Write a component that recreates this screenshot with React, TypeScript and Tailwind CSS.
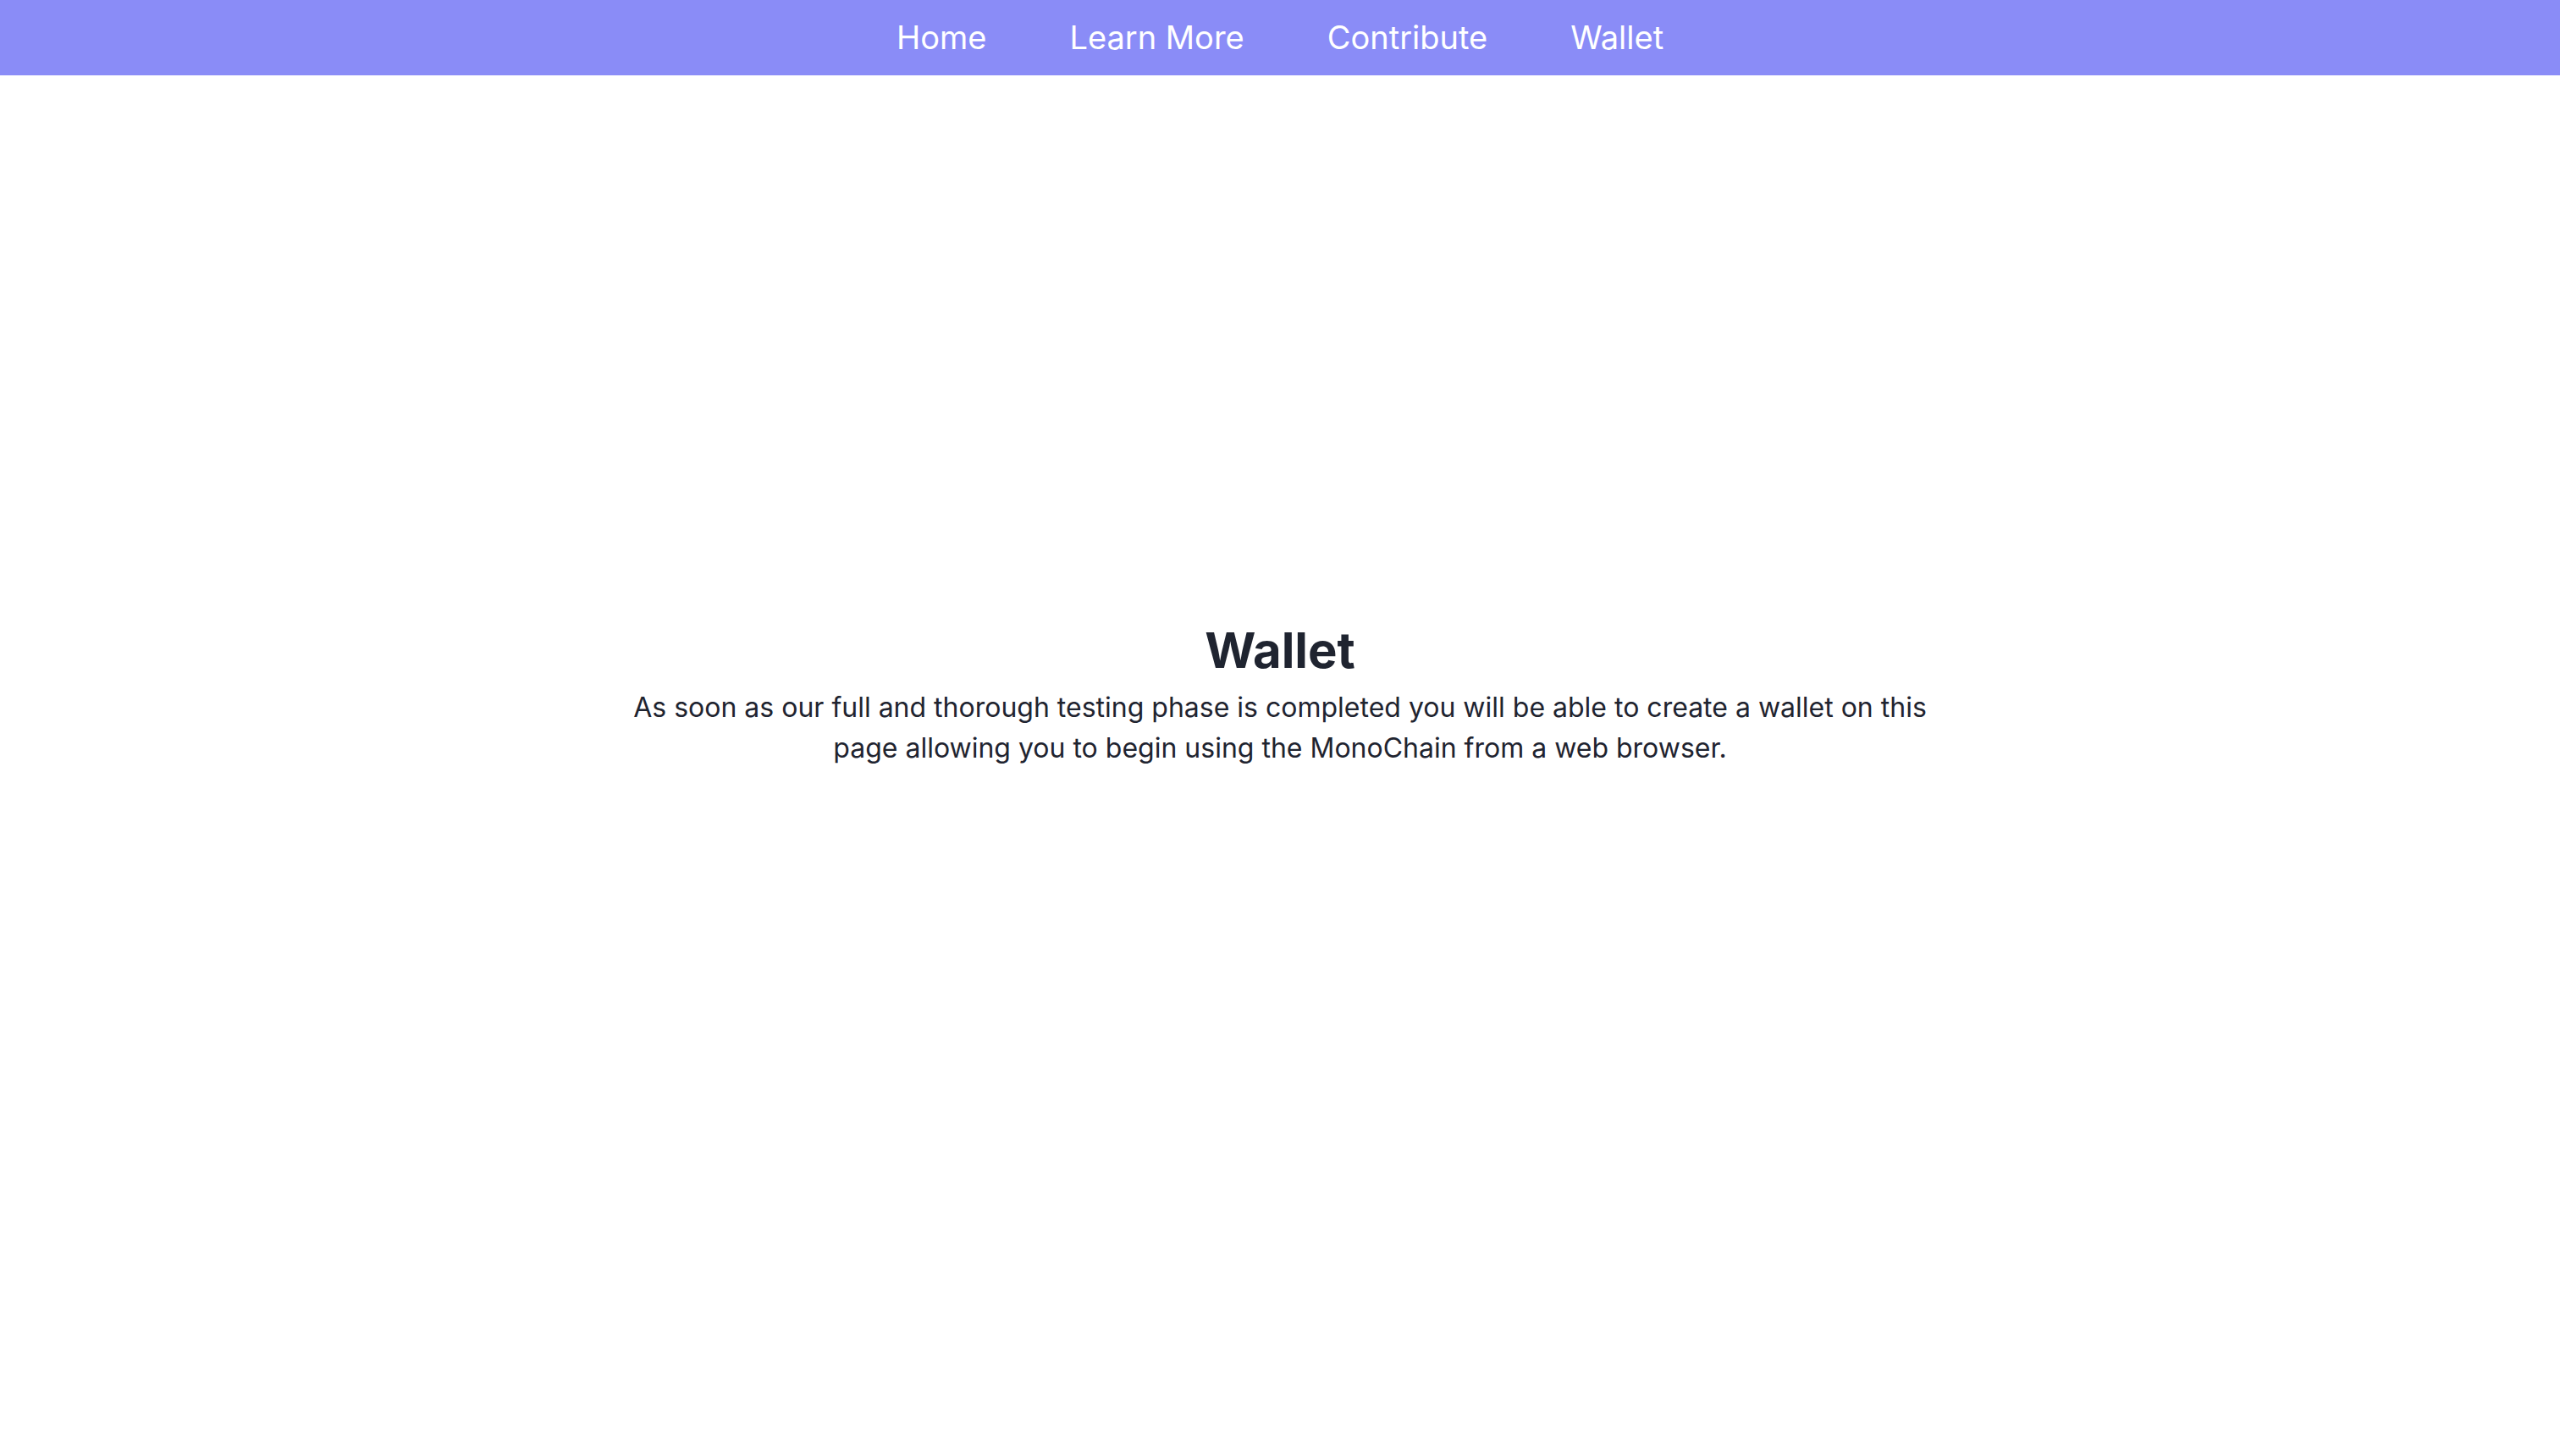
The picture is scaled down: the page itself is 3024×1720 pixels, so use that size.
import React from 'react';

const links = ['Home', 'Learn More', 'Contribute', 'Wallet'];

const Navbar: React.FC = () => {
  return (
    <nav className="w-full h-[89px] bg-[#8a8cf7] flex items-center justify-center gap-[98px]">
      {links.map((label) => (
        <a key={label} href="#" className="text-white text-[38px] leading-[56px] font-normal -mt-[2px]">
          {label}
        </a>
      ))}
    </nav>
  );
};

const App: React.FC = () => {
  return (
    <div className="min-h-screen bg-white font-['Inter',sans-serif]">
      <Navbar />
      <main className="flex flex-col items-center pt-[643px] px-8">
        <h1 className="text-[58px] leading-[72px] font-bold text-[#1f2430]">Wallet</h1>
        <p className="mt-2 max-w-[1536px] text-center text-[32px] leading-[48px] text-[#1f2430]">
          As soon as our full and thorough testing phase is completed you will be able to create a wallet on this
          page allowing you to begin using the MonoChain from a web browser.
        </p>
      </main>
    </div>
  );
};

export default App;
